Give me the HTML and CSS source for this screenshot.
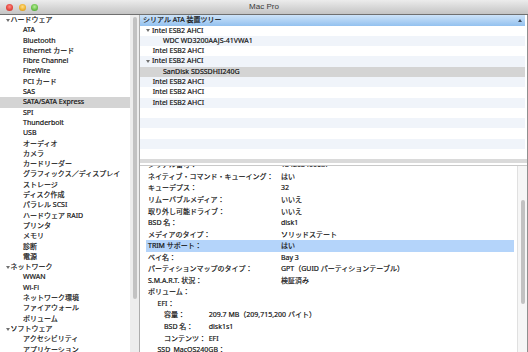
FILE: index.html
```html
<!DOCTYPE html>
<html lang="ja">
<head>
<meta charset="utf-8">
<title>Mac Pro</title>
<link rel="stylesheet" href="styles.css">
</head>
<body>
<div class="window">
  <div class="titlebar">
    <div class="lights">
      <span class="light red"></span>
      <span class="light yellow"></span>
      <span class="light green"></span>
    </div>
    <div class="title">Mac Pro</div>
    <div></div>
  </div>
  <div class="body">
    <div class="sidebar">
      <div class="src-row group"><span class="disclosure"></span>ハードウェア</div>
      <div class="src-row">ATA</div>
      <div class="src-row">Bluetooth</div>
      <div class="src-row">Ethernet カード</div>
      <div class="src-row">Fibre Channel</div>
      <div class="src-row">FireWire</div>
      <div class="src-row">PCI カード</div>
      <div class="src-row">SAS</div>
      <div class="src-row selected">SATA/SATA Express</div>
      <div class="src-row">SPI</div>
      <div class="src-row">Thunderbolt</div>
      <div class="src-row">USB</div>
      <div class="src-row">オーディオ</div>
      <div class="src-row">カメラ</div>
      <div class="src-row">カードリーダー</div>
      <div class="src-row">グラフィックス／ディスプレイ</div>
      <div class="src-row">ストレージ</div>
      <div class="src-row">ディスク作成</div>
      <div class="src-row">パラレル SCSI</div>
      <div class="src-row">ハードウェア RAID</div>
      <div class="src-row">プリンタ</div>
      <div class="src-row">メモリ</div>
      <div class="src-row">診断</div>
      <div class="src-row">電源</div>
      <div class="src-row group"><span class="disclosure"></span>ネットワーク</div>
      <div class="src-row">WWAN</div>
      <div class="src-row">Wi-Fi</div>
      <div class="src-row">ネットワーク環境</div>
      <div class="src-row">ファイアウォール</div>
      <div class="src-row">ボリューム</div>
      <div class="src-row group"><span class="disclosure"></span>ソフトウェア</div>
      <div class="src-row">アクセシビリティ</div>
      <div class="src-row">アプリケーション</div>
    </div>
    <div class="side-scroll"><div class="thumb"></div></div>
    <div class="main">
      <div class="tree">
        <div class="tree-head"><span>シリアル ATA 装置ツリー</span><span class="sort-arrow"></span></div>
        <div class="tree-row exp"><span class="disclosure"></span>Intel ESB2 AHCI</div>
        <div class="tree-row child alt">WDC WD3200AAJS-41VWA1</div>
        <div class="tree-row">Intel ESB2 AHCI</div>
        <div class="tree-row exp alt"><span class="disclosure"></span>Intel ESB2 AHCI</div>
        <div class="tree-row child sel">SanDisk SDSSDHII240G</div>
        <div class="tree-row alt">Intel ESB2 AHCI</div>
        <div class="tree-row">Intel ESB2 AHCI</div>
        <div class="tree-row alt">Intel ESB2 AHCI</div>
        <div class="tree-row"></div>
        <div class="tree-row alt"></div>
        <div class="tree-row"></div>
        <div class="tree-row alt"></div>
        <div class="tree-row"></div>
      </div>
      <div class="splitter"></div>
      <div class="details">
        <div class="details-content">
          <div class="details-inner">
            <div class="d-row"><span class="k">シリアル番号：</span><span>134203400687</span></div>
            <div class="d-row"><span class="k">ネイティブ・コマンド・キューイング：</span><span>はい</span></div>
            <div class="d-row"><span class="k">キューデプス：</span><span>32</span></div>
            <div class="d-row"><span class="k">リムーバブルメディア：</span><span>いいえ</span></div>
            <div class="d-row"><span class="k">取り外し可能ドライブ：</span><span>いいえ</span></div>
            <div class="d-row"><span class="k">BSD 名：</span><span>disk1</span></div>
            <div class="d-row"><span class="k">メディアのタイプ：</span><span>ソリッドステート</span></div>
            <div class="d-row hl"><span class="k">TRIM サポート：</span><span>はい</span></div>
            <div class="d-row"><span class="k">ベイ名：</span><span>Bay 3</span></div>
            <div class="d-row"><span class="k">パーティションマップのタイプ：</span><span>GPT（GUID パーティションテーブル）</span></div>
            <div class="d-row"><span class="k">S.M.A.R.T. 状況：</span><span>検証済み</span></div>
            <div class="d-row"><span class="k">ボリューム：</span></div>
            <div class="d-row l1"><span>EFI：</span></div>
            <div class="d-row l2"><span class="k">容量：</span><span>209.7 MB（209,715,200 バイト）</span></div>
            <div class="d-row l2"><span class="k">BSD 名：</span><span>disk1s1</span></div>
            <div class="d-row l2"><span class="k">コンテンツ：</span><span>EFI</span></div>
            <div class="d-row l1"><span>SSD_MacOS240GB：</span></div>
            <div class="d-row l2"><span class="k">容量：</span><span>239.4 GB</span></div>
          </div>
        </div>
        <div class="details-scroll"><div class="thumb"></div></div>
      </div>
    </div>
  </div>
</div>
</body>
</html>
```

FILE: styles.css
```css
* {
  box-sizing: border-box;
  margin: 0;
  padding: 0;
}

html, body {
  width: 528px;
  height: 352px;
  overflow: hidden;
}

body {
  font-family: "Noto Sans", "Noto Sans CJK JP", sans-serif;
  font-size: 7px;
  line-height: 10.3px;
  color: #111;
  -webkit-text-stroke: 0.18px #111;
  background: #fff;
}

.window {
  display: flex;
  flex-direction: column;
  height: 352px;
}

/* title bar */
.titlebar {
  height: 15px;
  flex: none;
  display: grid;
  grid-template-columns: 1fr auto 1fr;
  align-items: center;
  background: linear-gradient(#ececec, #c4c4c4);
  border-bottom: 1px solid #6f6f6f;
}

.lights {
  display: flex;
  gap: 5.5px;
  padding-left: 6px;
}

.light {
  width: 7px;
  height: 7px;
  border-radius: 50%;
}

.light.red {
  background: radial-gradient(circle at 50% 40%, #ff8c84 0, #e5473f 55%, #b9302a 100%);
}

.light.yellow {
  background: radial-gradient(circle at 50% 40%, #ffe08a 0, #efb22e 55%, #c58a18 100%);
}

.light.green {
  background: radial-gradient(circle at 50% 40%, #b8f09a 0, #6cc24c 55%, #3f8f2a 100%);
}

.title {
  font-family: "Liberation Sans", sans-serif;
  font-size: 8px;
  line-height: 10px;
  color: #3a3a3a;
  -webkit-text-stroke: 0;
}

/* body */
.body {
  flex: 1;
  display: flex;
  min-height: 0;
}

.sidebar {
  width: 130px;
  flex: none;
  background: #fff;
  overflow: hidden;
}

.src-row {
  height: 10.3px;
  line-height: 10.3px;
  display: flex;
  align-items: center;
  white-space: nowrap;
  padding-left: 23px;
}

.src-row.group {
  padding-left: 6px;
}

.src-row.selected {
  background: #d4d4d4;
}

.disclosure {
  width: 0;
  height: 0;
  flex: none;
  border-left: 2px solid transparent;
  border-right: 2px solid transparent;
  border-top: 3.6px solid #707070;
  margin-right: 0.5px;
}

.side-scroll {
  width: 10px;
  flex: none;
  background: #ededed;
  border-right: 1px solid #adadad;
  padding: 1.5px 0 0 2.7px;
}

.side-scroll .thumb {
  width: 4px;
  height: 282px;
  border-radius: 2px;
  background: #c2c2c2;
}

/* main area */
.main {
  flex: 1;
  min-width: 0;
  display: flex;
  flex-direction: column;
  border-right: 1px solid #8f8f8f;
}

.tree {
  height: 144.4px;
  flex: none;
  overflow: hidden;
  padding-right: 2px;
}

.tree-head {
  height: 10.5px;
  line-height: 10.5px;
  display: flex;
  align-items: center;
  justify-content: space-between;
  padding: 0 3px 0 3px;
  background: linear-gradient(#cde3f9, #93c1ef);
  white-space: nowrap;
}

.sort-arrow {
  width: 0;
  height: 0;
  border-left: 2px solid transparent;
  border-right: 2px solid transparent;
  border-bottom: 3.5px solid #3d4a5a;
}

.tree-row {
  height: 10.3px;
  line-height: 10.3px;
  display: flex;
  align-items: center;
  white-space: nowrap;
  padding-left: 12.7px;
}

.tree-row.exp {
  padding-left: 6px;
}

.tree-row.exp .disclosure {
  margin-right: 2px;
}

.tree-row.child {
  padding-left: 23px;
}

.tree-row.alt {
  background: #f0f4fa;
}

.tree-row.sel {
  background: #d4d4d4;
}

.splitter {
  height: 7px;
  flex: none;
  background: linear-gradient(#dadada 0, #dadada 3.6px, #fff 3.6px, #fff 6px, #c9c9c9 6px, #c9c9c9 7px);
}

/* details */
.details {
  flex: 1;
  min-height: 0;
  display: flex;
}

.details-content {
  flex: 1;
  min-width: 0;
  overflow: hidden;
}

.details-inner {
  margin-top: -7.05px;
}

.d-row {
  height: 11.55px;
  line-height: 11.55px;
  display: flex;
  align-items: center;
  white-space: nowrap;
  padding-left: 8px;
}

.d-row .k {
  width: 133px;
  flex: none;
}

.d-row.l1 {
  padding-left: 17.5px;
}

.d-row.l2 {
  padding-left: 24px;
}

.d-row.l2 .k {
  width: 44.7px;
}

.d-row.hl {
  background: #b4d4fa;
  margin: 0 3px 0 6px;
  padding-left: 2px;
}

.details-scroll {
  width: 10px;
  flex: none;
  background: #f6f6f6;
  border-left: 1px solid #e0e0e0;
  padding: 33.5px 0 0 2.5px;
}

.details-scroll .thumb {
  width: 4.5px;
  height: 104px;
  border-radius: 2.25px;
  background: #c2c2c2;
}
```
